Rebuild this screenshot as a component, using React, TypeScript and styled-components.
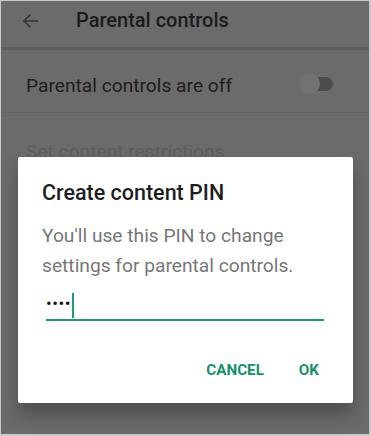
import styled, { createGlobalStyle } from "styled-components";

const GlobalStyle = createGlobalStyle`
    html, body {
        margin: 0;
        padding: 0;
        background: #ffffff;
    }
    body {
        font-family: Roboto, "Noto Sans", "Liberation Sans", sans-serif;
    }
`

function BackArrow() {
    return (
        <svg width="17" height="16" viewBox="0 0 17 16">
            <path d="M16 8H2M8.5 1.5L2 8L8.5 14.5" fill="none" stroke="#333333" strokeWidth="1.6" />
        </svg>
    )
}

function App() {
    return (
        <>
            <GlobalStyle />
            <Frame>
                <Header>
                    <IconSlot><BackArrow /></IconSlot>
                    <Title>Parental controls</Title>
                </Header>
                <Row>
                    <RowLabel>Parental controls are off</RowLabel>
                    <Switch>
                        <Track />
                        <Thumb />
                    </Switch>
                </Row>
                <Row faded>
                    <RowLabel faded>Set content restrictions</RowLabel>
                </Row>

                <Dialog>
                    <DialogTitle>Create content PIN</DialogTitle>
                    <DialogText>You'll use this PIN to change settings for parental controls.</DialogText>
                    <PinField>
                        <Dots>••••</Dots>
                        <Caret />
                    </PinField>
                    <Actions>
                        <ActionButton>CANCEL</ActionButton>
                        <ActionButton>OK</ActionButton>
                    </Actions>
                </Dialog>
            </Frame>
        </>
    )
}

const Frame = styled.div`
    position: relative;
    width: 371px;
    height: 436px;
    box-sizing: border-box;
    border-top: 1px solid #c9c9c9;
    border-left: 1px solid #c9c9c9;
    border-right: 2px solid #c9c9c9;
    border-bottom: 2px solid #c9c9c9;
    background: #6b6b6b;
    overflow: hidden;
`

const Header = styled.div`
    height: 46px;
    display: flex;
    align-items: center;
    border-bottom: 3px solid #5f5f5f;
`

const IconSlot = styled.div`
    width: 75px;
    display: flex;
    padding-left: 21px;
    box-sizing: border-box;
    margin-top: -7px;
`

const Title = styled.div`
    font-size: 20px;
    font-weight: 500;
    color: #1b1b1b;
    margin-top: -8px;
`

const Row = styled.div<{ faded?: boolean }>`
    height: 62px;
    display: flex;
    align-items: center;
    justify-content: space-between;
    padding: 0 34px 0 25px;
    border-bottom: ${({ faded }) => (faded ? "none" : "1px solid #636363")};
`

const RowLabel = styled.div<{ faded?: boolean }>`
    font-size: 19.2px;
    color: ${({ faded }) => (faded ? "#5e5e5e" : "#1d1d1d")};
    margin-top: ${({ faded }) => (faded ? "14px" : "8px")};
`

const Switch = styled.div`
    position: relative;
    width: 36px;
    height: 22px;
    margin-top: 5px;
`

const Track = styled.div`
    position: absolute;
    left: 6px;
    top: 4px;
    width: 28px;
    height: 14px;
    border-radius: 7px;
    background: #4c4c4c;
`

const Thumb = styled.div`
    position: absolute;
    left: 0;
    top: 0;
    width: 21px;
    height: 21px;
    border-radius: 50%;
    background: #727272;
`

const Dialog = styled.div`
    position: absolute;
    left: 17px;
    top: 156px;
    width: 335px;
    height: 246px;
    box-sizing: border-box;
    background: #ffffff;
    border-radius: 2px;
    box-shadow: 0 12px 18px rgba(0, 0, 0, 0.28);
    padding: 22px 24px 0 24px;
`

const DialogTitle = styled.div`
    font-size: 21.5px;
    font-weight: 500;
    color: #1f1f1f;
    line-height: 28px;
`

const DialogText = styled.div`
    margin-top: 14px;
    font-size: 19.2px;
    line-height: 30px;
    color: #777777;
`

const PinField = styled.div`
    margin: 8px 5px 0 4px;
    height: 30px;
    display: flex;
    align-items: center;
    border-bottom: 2px solid #1f9a72;
`

const Dots = styled.span`
    font-size: 17px;
    letter-spacing: 0.5px;
    color: #111;
    margin-top: -2px;
`

const Caret = styled.span`
    display: inline-block;
    width: 2px;
    height: 25px;
    background: #1f9a72;
    margin-left: 1px;
    margin-top: 2px;
`

const Actions = styled.div`
    margin-top: 40px;
    display: flex;
    justify-content: flex-end;
    gap: 35px;
    padding-right: 10px;
`

const ActionButton = styled.button`
    border: none;
    background: none;
    padding: 0;
    font-family: Roboto, "Noto Sans", "Liberation Sans", sans-serif;
    font-size: 15.2px;
    font-weight: 700;
    color: #16916b;
    cursor: pointer;
`

export default App
